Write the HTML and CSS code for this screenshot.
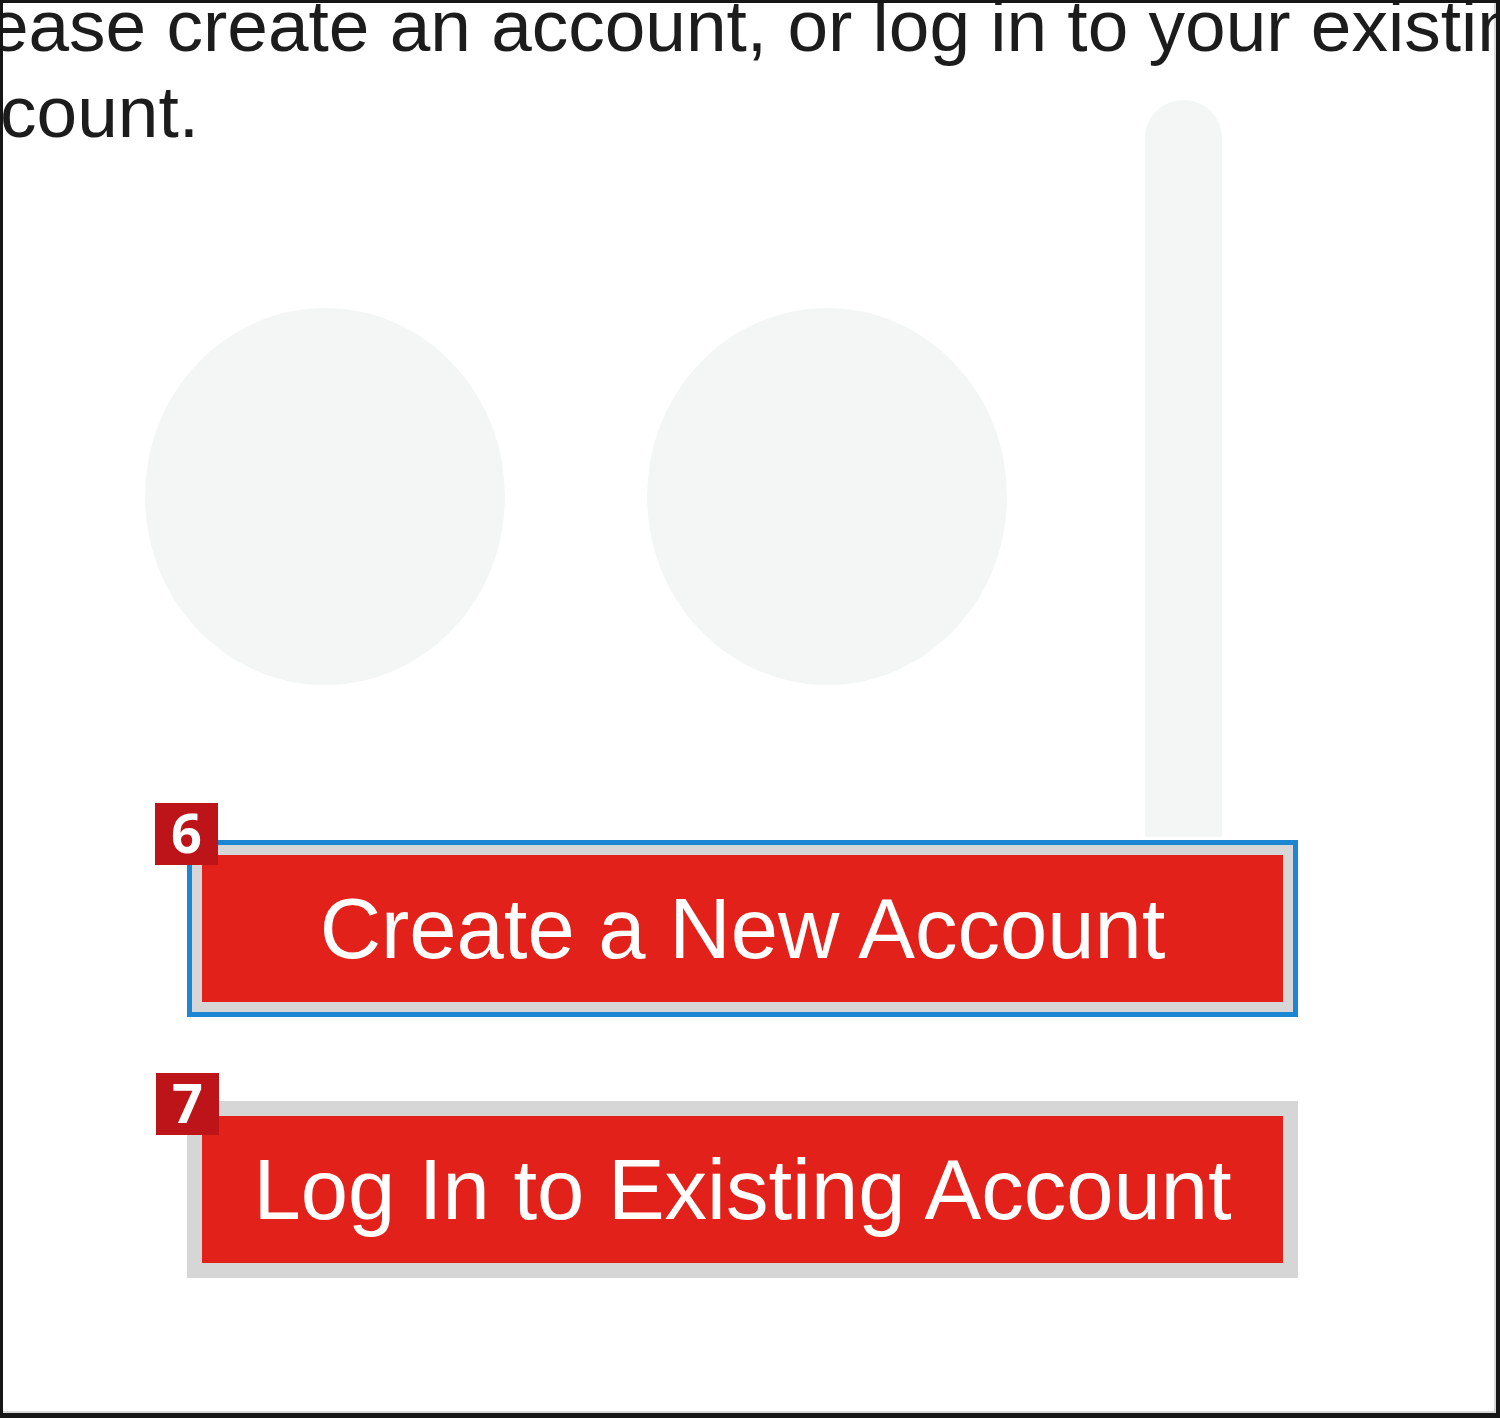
FILE: index.html
```html
<!DOCTYPE html>
<html lang="en">
<head>
  <meta charset="UTF-8">
  <title>Create Account</title>
  <meta name="viewport" content="width=device-width, initial-scale=1.0">
  <link rel="stylesheet" href="styles.css">
</head>
<body>
  <div class="frame">
    <p class="intro">Please create an account, or log in to your existing<br>account.</p>

    <div class="art">
      <div class="dot"></div>
      <div class="dot"></div>
      <div class="bar"></div>
    </div>

    <div class="actions">
      <div class="action">
        <span class="badge badge-first">6</span>
        <button class="btn focused">Create a New Account</button>
      </div>
      <div class="action">
        <span class="badge">7</span>
        <button class="btn">Log In to Existing Account</button>
      </div>
    </div>
  </div>
</body>
</html>
```

FILE: styles.css
```css
body { margin: 0; background: #fff; }
.frame { width: 1500px; height: 1418px; box-sizing: border-box; border: 3px solid #161616; border-right-width: 4px; border-bottom-width: 5px; overflow: hidden; background: #fff; box-shadow: inset -2px -2px 0 #d8d8d8; }
.intro { margin: -20px 0 0 -80px; font-family: "Liberation Sans", Arial, sans-serif; font-size: 73px; line-height: 86px; color: #1c1c1c; white-space: nowrap; }
.art { display: flex; align-items: flex-start; margin-top: -55px; padding-left: 142px; height: 737px; }
.dot { width: 360px; height: 377px; margin-top: 208px; margin-right: 142px; border-radius: 50%; background: #f4f6f5; }
.dot + .dot { margin-right: 138px; }
.bar { width: 77px; height: 737px; border-radius: 38px 38px 0 0; background: #f4f6f5; }
.actions { display: flex; flex-direction: column; gap: 84px; margin-top: 3px; padding-left: 184px; }
.action { position: relative; width: 1111px; }
.btn { display: block; width: 1111px; height: 177px; box-sizing: border-box; border: 15px solid #d6d6d6; background: #e2211a; color: #fff; font-family: "Liberation Sans", Arial, sans-serif; font-size: 85px; padding: 0; margin: 0; }
.focused { outline: 5px solid #1b87d2; outline-offset: -5px; }
.badge { position: absolute; left: -31px; top: -28px; z-index: 1; width: 63px; height: 62px; background: #bc1418; color: #fff; font-family: "Open Sans", sans-serif; font-weight: 700; font-size: 54px; line-height: 58px; text-align: center; }
.badge-first { top: -37px; left: -32px; }
```
